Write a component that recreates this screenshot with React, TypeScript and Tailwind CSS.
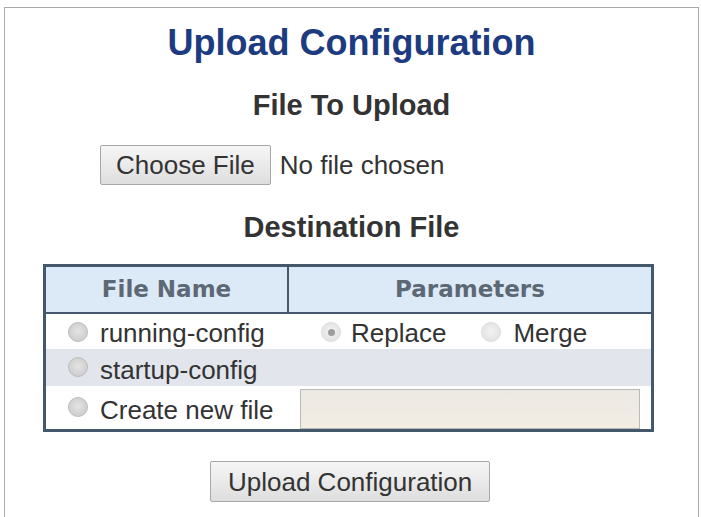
import React from 'react';

const Radio = ({ checked = false, faded = false, className = '' }: { checked?: boolean; faded?: boolean; className?: string }) => (
  <span
    className={`flex items-center justify-center w-[20px] h-[20px] rounded-full border shrink-0 ${className} ${
      faded
        ? 'border-[#dcdcdc] bg-[radial-gradient(circle_at_50%_45%,#f2f2f2,#dedede)]'
        : 'border-[#bcbcbc] bg-[radial-gradient(circle_at_50%_45%,#e4e4e4,#c6c6c6)]'
    }`}
  >
    {checked && <span className="w-[7px] h-[7px] rounded-full bg-[#9d9d9d]" />}
  </span>
);

const App = () => {
  return (
    <div className="w-[701px] h-[517px] bg-white overflow-hidden font-['Liberation_Sans',Arial,sans-serif] text-[#333]">
      <div className="mt-[7px] ml-[4px] mr-[2px] h-[520px] border-t border-l border-r border-[#a9a9a9] pt-[17px]">
        <h1 className="text-center text-[36px] leading-[36px] font-bold text-[#1d3b80]">Upload Configuration</h1>

        <h2 className="mt-[30px] text-center text-[29px] leading-[29px] font-bold text-[#333]">File To Upload</h2>

        <div className="mt-[25px] ml-[95px] flex items-center h-[40px]">
          <button className="h-[40px] px-[15px] border border-[#a8a8a8] rounded-[2px] bg-gradient-to-b from-[#f6f6f6] to-[#dedede] text-[26px] leading-none text-[#333]">
            Choose File
          </button>
          <span className="ml-[9px] text-[26px] leading-none text-[#333]">No file chosen</span>
        </div>

        <h2 className="mt-[28px] text-center text-[29px] leading-[29px] font-bold text-[#333]">Destination File</h2>

        <div className="mt-[22px] ml-[38px] w-[611px] border-[3px] border-[#44586b]">
          <div className="flex h-[47px] bg-[#dce9f7] border-b-[2px] border-[#44586b] font-['DejaVu_Sans',Verdana,sans-serif] font-bold text-[23px] text-[#5d6875]">
            <div className="w-[243px] border-r-[2px] border-[#44586b] flex items-center justify-center">File Name</div>
            <div className="flex-1 flex items-center justify-center">Parameters</div>
          </div>

          <div className="flex h-[35px] bg-white text-[26px] leading-none">
            <div className="w-[243px] flex items-start pl-[22px]">
              <Radio className="mt-[8px]" />
              <span className="mt-[6px] ml-[12px]">running-config</span>
            </div>
            <div className="flex-1 flex items-start pl-[32px]">
              <Radio checked faded className="mt-[8px]" />
              <span className="mt-[6px] ml-[10px]">Replace</span>
              <Radio faded className="mt-[8px] ml-[35px]" />
              <span className="mt-[6px] ml-[12px]">Merge</span>
            </div>
          </div>

          <div className="flex h-[37px] bg-[#e2e6ec] text-[26px] leading-none">
            <div className="w-[243px] flex items-start pl-[22px]">
              <Radio className="mt-[8px]" />
              <span className="mt-[8px] ml-[12px]">startup-config</span>
            </div>
          </div>

          <div className="flex h-[43px] bg-white text-[26px] leading-none">
            <div className="w-[243px] flex items-start pl-[22px]">
              <Radio className="mt-[11px]" />
              <span className="mt-[11px] ml-[12px]">Create new file</span>
            </div>
            <div className="flex-1 flex items-end pl-[11px] pr-[11px]">
              <div className="w-full h-[40px] border border-[#b9b9b9] bg-gradient-to-b from-[#ece9e4] to-[#f2ede3]" />
            </div>
          </div>
        </div>

        <div className="mt-[29px] ml-[205px] flex">
          <button className="h-[41px] px-[17px] border border-[#a8a8a8] rounded-[2px] bg-gradient-to-b from-[#f6f6f6] to-[#dedede] text-[26px] leading-none text-[#333]">
            Upload Configuration
          </button>
        </div>
      </div>
    </div>
  );
};

export default App;
